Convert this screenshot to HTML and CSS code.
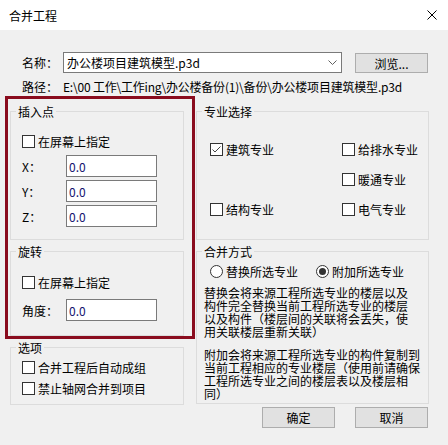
FILE: index.html
```html
<!DOCTYPE html>
<html lang="zh-CN">
<head>
<meta charset="utf-8">
<title>合并工程</title>
<link rel="stylesheet" href="styles.css">
</head>
<body>
<div class="window">
  <div class="titlebar">
    <span class="title">合并工程</span>
    <svg class="close" width="10" height="10" viewBox="0 0 10 10"><path d="M0.5 0.5L9.5 9.5M9.5 0.5L0.5 9.5" stroke="#000" stroke-width="1" fill="none"/></svg>
  </div>
  <div class="content">
    <div class="name-row">
      <span class="lbl">名称：</span>
      <div class="combo">
        <span class="combo-text">办公楼项目建筑模型.p3d</span>
        <span class="combo-arrow"><svg width="9" height="5" viewBox="0 0 9 5"><path d="M0.5 0.5L4.5 4.5L8.5 0.5" stroke="#606060" stroke-width="1" fill="none"/></svg></span>
      </div>
      <button class="btn browse">浏览...</button>
    </div>
    <div class="path-row">
      <span class="lbl">路径：</span>
      <span class="path">E:\00 工作\工作ing\办公楼备份(1)\备份\办公楼项目建筑模型.p3d</span>
    </div>
    <div class="columns">
      <div class="col-left">
        <div class="highlight">
          <fieldset class="group g-insert">
            <legend>插入点</legend>
            <div class="g-body">
              <label class="cb"><span class="box"></span>在屏幕上指定</label>
              <div class="field first"><span class="flbl">X：</span><span class="input">0.0</span></div>
              <div class="field"><span class="flbl">Y：</span><span class="input">0.0</span></div>
              <div class="field"><span class="flbl">Z：</span><span class="input">0.0</span></div>
            </div>
          </fieldset>
          <fieldset class="group g-rotate">
            <legend>旋转</legend>
            <div class="g-body">
              <label class="cb"><span class="box"></span>在屏幕上指定</label>
              <div class="field angle"><span class="flbl">角度：</span><span class="input">0.0</span></div>
            </div>
          </fieldset>
        </div>
        <fieldset class="group g-options">
          <legend>选项</legend>
          <div class="g-body">
            <label class="cb"><span class="box"></span>合并工程后自动成组</label>
            <label class="cb second"><span class="box"></span>禁止轴网合并到项目</label>
          </div>
        </fieldset>
      </div>
      <div class="col-right">
        <fieldset class="group g-spec">
          <legend>专业选择</legend>
          <div class="g-body spec-grid">
            <label class="cb"><span class="box"><svg width="11" height="11" viewBox="0 0 11 11"><path d="M1.5 5.5L4 8L9.5 2.5" stroke="#444" stroke-width="1" fill="none"/></svg></span>建筑专业</label>
            <label class="cb"><span class="box"></span>给排水专业</label>
            <span></span>
            <label class="cb"><span class="box"></span>暖通专业</label>
            <label class="cb"><span class="box"></span>结构专业</label>
            <label class="cb"><span class="box"></span>电气专业</label>
          </div>
        </fieldset>
        <fieldset class="group g-merge">
          <legend>合并方式</legend>
          <div class="g-body">
            <div class="radios">
              <label class="rb"><span class="circle"></span>替换所选专业</label>
              <label class="rb"><span class="circle checked"><span class="dot"></span></span>附加所选专业</label>
            </div>
            <p class="desc">替换会将来源工程所选专业的楼层以及<br>构件完全替换当前工程所选专业的楼层<br>以及构件（楼层间的关联将会丢失，使<br>用关联楼层重新关联）</p>
            <p class="desc second">附加会将来源工程所选专业的构件复制到<br>当前工程相应的专业楼层（使用前请确保<br>工程所选专业之间的楼层表以及楼层相<br>同）</p>
          </div>
        </fieldset>
        <div class="buttons">
          <button class="btn action">确定</button>
          <button class="btn action">取消</button>
        </div>
      </div>
    </div>
  </div>
</div>
</body>
</html>
```

FILE: styles.css
```css
* { box-sizing: border-box; }

html, body {
  margin: 0;
  padding: 0;
}

body {
  width: 448px;
  height: 445px;
  overflow: hidden;
  background: #f0f0f0;
  color: #000;
  font-family: "Noto Sans CJK SC", "Microsoft YaHei", sans-serif;
  font-size: 12px;
  line-height: 17px;
}

.window {
  width: 448px;
  height: 445px;
  background: #f0f0f0;
}

.titlebar {
  height: 30px;
  background: #fff;
  display: flex;
  align-items: center;
  justify-content: space-between;
  padding: 0 11px 0 9px;
}

.title {
  font-size: 12px;
  line-height: 17px;
}

.close {
  display: block;
}

.content {
  padding-top: 22px;
}

.name-row {
  display: flex;
  align-items: flex-start;
  padding-left: 22px;
}

.lbl {
  width: 41px;
  flex: none;
  white-space: nowrap;
}

.name-row .lbl {
  margin-top: 2px;
}

.combo {
  width: 279px;
  height: 21px;
  border: 1px solid #7a7a7a;
  background: #fff;
  display: flex;
  align-items: center;
  padding-left: 3px;
}

.combo-text {
  flex: 1;
  white-space: nowrap;
}

.combo-arrow {
  width: 18px;
  height: 19px;
  display: flex;
  align-items: center;
  justify-content: center;
}

.combo-arrow svg {
  display: block;
}

.btn {
  font-family: inherit;
  font-size: 12px;
  line-height: 17px;
  color: #000;
  background: #e1e1e1;
  border: 1px solid #adadad;
  padding: 0;
  margin: 0;
  border-radius: 0;
}

.browse {
  width: 73px;
  height: 20px;
  margin-left: 13px;
  margin-top: 1px;
}

.path-row {
  display: flex;
  padding-left: 22px;
  margin-top: 5px;
  white-space: nowrap;
}

.path {
  letter-spacing: -0.2px;
}

.columns {
  display: flex;
  gap: 1px;
  padding-left: 5px;
  margin-top: 1px;
}

.col-left {
  width: 190px;
  flex: none;
}

.col-right {
  width: 233px;
  flex: none;
  padding-top: 7px;
}

.highlight {
  width: 190px;
  border: 3px solid #8a0c1e;
  padding: 4px 0 0 2px;
}

.group {
  margin: 0;
  padding: 0;
  border: 1px solid #dcdcdc;
  min-width: 0;
}

.group legend {
  margin-left: 5px;
  padding: 0 2px;
  font-size: 12px;
  line-height: 17px;
}

.g-insert, .g-rotate {
  width: 174px;
}

.g-insert .g-body {
  padding: 13px 0 12px 11px;
}

.g-rotate {
  margin-top: 3px;
}

.g-rotate .g-body {
  padding: 14px 0 14px 11px;
}

.g-options {
  width: 174px;
  margin-left: 5px;
}

.g-options .g-body {
  padding: 3px 0 7px 11px;
}

.cb {
  display: flex;
  align-items: center;
  gap: 3px;
  height: 17px;
  white-space: nowrap;
}

.cb.second {
  margin-top: 4px;
}

.box {
  width: 13px;
  height: 13px;
  border: 1px solid #333;
  background: #fff;
  flex: none;
  display: flex;
  align-items: center;
  justify-content: center;
}

.box svg {
  display: block;
}

.field {
  display: flex;
  align-items: center;
  height: 22px;
  margin-top: 3px;
}

.field.first {
  margin-top: 5px;
}

.field.angle {
  margin-top: 8px;
}

.flbl {
  width: 44px;
  flex: none;
  white-space: nowrap;
}

.input {
  width: 91px;
  height: 22px;
  border: 1px solid #7a7a7a;
  background: #fff;
  padding-left: 2px;
  color: #121270;
  display: flex;
  align-items: center;
}

.g-spec {
  width: 233px;
}

.spec-grid {
  display: grid;
  grid-template-columns: 132px auto;
  row-gap: 13px;
  padding: 21px 0 21px 13px;
}

.g-merge {
  width: 233px;
  margin-top: 3px;
}

.g-merge .g-body {
  padding: 3px 0 3px 7px;
}

.radios {
  display: grid;
  grid-template-columns: 106px auto;
  margin-left: 6px;
}

.rb {
  display: flex;
  align-items: center;
  gap: 3px;
  height: 17px;
  white-space: nowrap;
}

.circle {
  width: 13px;
  height: 13px;
  border: 1px solid #333;
  border-radius: 50%;
  background: #fff;
  flex: none;
  display: flex;
  align-items: center;
  justify-content: center;
}

.dot {
  width: 7px;
  height: 7px;
  border-radius: 50%;
  background: #333;
}

.desc {
  margin: 6px 0 0 0;
  line-height: 13px;
  white-space: nowrap;
}

.desc.second {
  margin-top: 10px;
}

.buttons {
  display: flex;
  justify-content: flex-end;
  gap: 20px;
  margin-top: 3px;
  padding-right: 1px;
}

.action {
  width: 73px;
  height: 21px;
}
```
